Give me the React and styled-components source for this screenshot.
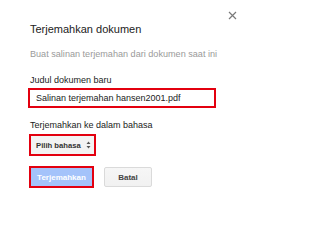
import React from "react";
import styled, { createGlobalStyle } from "styled-components";

const Global = createGlobalStyle`
  html, body { margin: 0; padding: 0; background: #fff; }
  body { font-family: "Liberation Sans", Arial, sans-serif; }
`;

const Dialog = styled.div`
  position: relative;
  width: 247px;
  height: 204px;
  box-sizing: border-box;
  padding: 23px 0 0 30px;
  background: #fff;
`;

const Close = styled.button`
  position: absolute;
  left: 227px;
  top: 10px;
  width: 10px;
  height: 10px;
  padding: 0;
  border: 0;
  background: none;
  display: flex;
  align-items: center;
  justify-content: center;
`;

const Title = styled.div`
  font-size: 11px;
  line-height: 13px;
  color: #222;
  margin-bottom: 13px;
`;

const Subtitle = styled.div`
  font-size: 9.1px;
  line-height: 11px;
  color: #9a9a9a;
  margin-bottom: 15px;
`;

const Label = styled.div`
  font-size: 9px;
  line-height: 11px;
  color: #222;
  margin-bottom: ${(p) => p.$gap}px;
`;

const TextInput = styled.div`
  box-sizing: border-box;
  width: 188px;
  height: 20px;
  margin-left: -2px;
  border: 2px solid #e3000f;
  padding-left: 6px;
  display: flex;
  align-items: center;
  font-size: 9px;
  color: #222;
  margin-bottom: 12px;
`;

const Select = styled.div`
  box-sizing: border-box;
  width: 67px;
  height: 22px;
  margin-left: -1px;
  border: 2px solid #e3000f;
  background: #f3f3f3;
  padding: 0 0 0 5px;
  display: flex;
  align-items: center;
  gap: 5px;
  font-size: 7.7px;
  font-weight: bold;
  color: #333;
  margin-bottom: 10px;
`;

const Buttons = styled.div`
  display: flex;
  align-items: flex-start;
  gap: 10px;
  margin-left: -1px;
`;

const Button = styled.button`
  box-sizing: border-box;
  height: ${(p) => (p.$primary ? 22 : 20)}px;
  width: ${(p) => (p.$primary ? 65 : 48)}px;
  margin-top: ${(p) => (p.$primary ? 0 : 1)}px;
  padding: 0;
  border: ${(p) => (p.$primary ? "2px solid #e3000f" : "1px solid #dadada")};
  background: ${(p) => (p.$primary ? "#a4c3fa" : "linear-gradient(#f6f6f6, #f1f1f1)")};
  color: ${(p) => (p.$primary ? "#fff" : "#444")};
  font-family: "Liberation Sans", Arial, sans-serif;
  font-size: 8px;
  font-weight: bold;
  border-radius: ${(p) => (p.$primary ? 0 : 2)}px;
`;

export default function App() {
  return (
    <>
      <Global />
      <Dialog>
        <Close aria-label="Tutup">
          <svg width="9" height="9" viewBox="0 0 9 9">
            <path d="M1 1L8 8M8 1L1 8" stroke="#7a7a7a" strokeWidth="1.2" />
          </svg>
        </Close>
        <Title>Terjemahkan dokumen</Title>
        <Subtitle>Buat salinan terjemahan dari dokumen saat ini</Subtitle>
        <Label $gap={2}>Judul dokumen baru</Label>
        <TextInput>Salinan terjemahan hansen2001.pdf</TextInput>
        <Label $gap={3}>Terjemahkan ke dalam bahasa</Label>
        <Select>
          Pilih bahasa
          <svg width="5" height="8" viewBox="0 0 5 8">
            <path d="M2.5 0.5L4.5 3H0.5Z M2.5 7.5L4.5 5H0.5Z" fill="#555" />
          </svg>
        </Select>
        <Buttons>
          <Button $primary>Terjemahkan</Button>
          <Button>Batal</Button>
        </Buttons>
      </Dialog>
    </>
  );
}
